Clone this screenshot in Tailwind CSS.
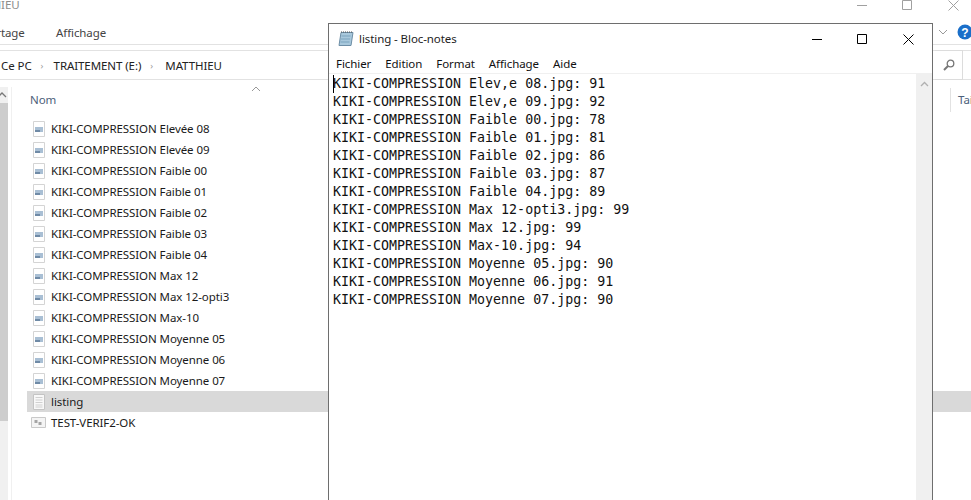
<!DOCTYPE html>
<html lang="fr">

<head>
  <meta charset="UTF-8" />
  <script src="https://cdn.jsdelivr.net/npm/@tailwindcss/browser@4"></script>
  <title>listing - Bloc-notes</title>
</head>

<body class="relative w-[971px] h-[500px] overflow-hidden bg-white font-['Noto_Sans',sans-serif] text-[11.5px] tracking-[-0.08px] text-[#1a1a1a]">

  <!-- explorer behind -->
  <div class="flex flex-col h-full">
    <div class="flex h-[22px] items-center justify-between text-[#8c8c8c]">
      <span class="ml-[-37px] mt-[-12px]">MATTHIEU</span>
      <div class="flex items-center mt-[-12px]">
        <svg class="w-[10px] h-[10px] mr-[35px]" viewBox="0 0 10 10"><path d="M0 5.500h10" stroke="#a0a0a0" fill="none"/></svg>
        <svg class="w-[10px] h-[10px] mr-[36px]" viewBox="0 0 10 10"><path d="M.5 .5h9v9h-9z" stroke="#a0a0a0" fill="none"/></svg>
        <svg class="w-[11px] h-[11px] mr-[12px]" viewBox="0 0 11 11"><path d="M.5 .5l10 10M10.500 .5l-10 10" stroke="#a0a0a0" fill="none"/></svg>
      </div>
    </div>
    <div class="relative flex h-[23px] items-center border-b border-[#e2e2e2] text-[#444]">
      <span class="ml-[-17px] w-[73px]">Partage</span>
      <span>Affichage</span>
      <svg class="absolute left-[938px] top-[7px] w-[10px] h-[6px]" viewBox="0 0 10 6"><path d="M1 1l4 4 4-4" stroke="#999" fill="none"/></svg>
      <svg class="absolute left-[957px] top-[2px] w-[16px] h-[16px]" viewBox="0 0 16 16"><circle cx="8" cy="8" r="7.500" fill="#1a6fc9"/><text x="8" y="12.500" text-anchor="middle" font-size="12" font-weight="700" fill="#fff" font-family="Liberation Sans">?</text></svg>
    </div>
    <div class="relative flex h-[30px] mt-[5px] pt-[2px] items-center gap-[9px] border-t border-b border-[#e2e2e2] text-[#222]">
      <span class="ml-[1px]">Ce PC</span>
      <span class="w-[4px] text-[#999] text-[9px]">›</span>
      <span>TRAITEMENT (E:)</span>
      <span class="w-[6px] text-[#999] text-[9px]">›</span>
      <span>MATTHIEU</span>
      <div class="absolute right-[8px] top-[-1px] bottom-[-1px] w-[28px] border-r border-t border-b border-[#dcdcdc] flex items-center justify-center">
        <svg class="w-[12px] h-[12px]" viewBox="0 0 12 12"><circle cx="7.500" cy="4.500" r="3.300" stroke="#777" stroke-width="1.300" fill="none"/><path d="M5 7l-4 4" stroke="#777" stroke-width="2" fill="none"/></svg>
      </div>
    </div>

    <div class="flex flex-1 min-h-0">
      <!-- nav scrollbar -->
      <div class="w-[8px] mt-[7px] bg-[#f0f0f0] shrink-0 flex flex-col">
        <div class="h-[16px] flex items-center">
          <svg class="w-[8px] h-[6px]" viewBox="0 0 8 6"><path d="M-2 5l4-4 4 4" stroke="#777" stroke-width="1.300" fill="none"/></svg>
        </div>
        <div class="h-[318px] bg-[#cdcdcd]"></div>
      </div>
      <div class="w-[4px] mt-[7px] border-r border-[#f0f0f0] shrink-0"></div>

      <!-- file list -->
      <div class="flex-1 min-w-0 ml-[15px] relative">
        <div class="relative h-[38px]">
          <span class="absolute left-[3px] top-[11px] text-[#4c607a]">Nom</span>
          <svg class="absolute left-[224px] top-[6px] w-[10px] h-[6px]" viewBox="0 0 10 6"><path d="M1 5l4-4 4 4" stroke="#999" fill="none"/></svg>
          <div class="absolute left-[923px] top-[8px] h-[24px] border-l border-[#e2e2e2]"></div>
          <span class="absolute left-[931px] top-[11px] text-[#4c607a]">Taille</span>
        </div>
        <ul>
          <li class="flex h-[21px] items-center"><svg class="w-[16px] h-[16px] ml-[4px] mr-[2px]" viewBox="0 0 16 16"><path d="M2.500 .5h11v15h-11z" fill="#fff" stroke="#d4d4d4"/><path d="M4 6h8v5H4z" fill="#a9bfd4"/><path d="M4 9h5v2H4z" fill="#6f8aa6"/></svg><span class="ml-[2px]">KIKI-COMPRESSION Elevée 08</span></li>
          <li class="flex h-[21px] items-center"><svg class="w-[16px] h-[16px] ml-[4px] mr-[2px]" viewBox="0 0 16 16"><path d="M2.500 .5h11v15h-11z" fill="#fff" stroke="#d4d4d4"/><path d="M4 6h8v5H4z" fill="#a9bfd4"/><path d="M4 9h5v2H4z" fill="#6f8aa6"/></svg><span class="ml-[2px]">KIKI-COMPRESSION Elevée 09</span></li>
          <li class="flex h-[21px] items-center"><svg class="w-[16px] h-[16px] ml-[4px] mr-[2px]" viewBox="0 0 16 16"><path d="M2.500 .5h11v15h-11z" fill="#fff" stroke="#d4d4d4"/><path d="M4 6h8v5H4z" fill="#a9bfd4"/><path d="M4 9h5v2H4z" fill="#6f8aa6"/></svg><span class="ml-[2px]">KIKI-COMPRESSION Faible 00</span></li>
          <li class="flex h-[21px] items-center"><svg class="w-[16px] h-[16px] ml-[4px] mr-[2px]" viewBox="0 0 16 16"><path d="M2.500 .5h11v15h-11z" fill="#fff" stroke="#d4d4d4"/><path d="M4 6h8v5H4z" fill="#a9bfd4"/><path d="M4 9h5v2H4z" fill="#6f8aa6"/></svg><span class="ml-[2px]">KIKI-COMPRESSION Faible 01</span></li>
          <li class="flex h-[21px] items-center"><svg class="w-[16px] h-[16px] ml-[4px] mr-[2px]" viewBox="0 0 16 16"><path d="M2.500 .5h11v15h-11z" fill="#fff" stroke="#d4d4d4"/><path d="M4 6h8v5H4z" fill="#a9bfd4"/><path d="M4 9h5v2H4z" fill="#6f8aa6"/></svg><span class="ml-[2px]">KIKI-COMPRESSION Faible 02</span></li>
          <li class="flex h-[21px] items-center"><svg class="w-[16px] h-[16px] ml-[4px] mr-[2px]" viewBox="0 0 16 16"><path d="M2.500 .5h11v15h-11z" fill="#fff" stroke="#d4d4d4"/><path d="M4 6h8v5H4z" fill="#a9bfd4"/><path d="M4 9h5v2H4z" fill="#6f8aa6"/></svg><span class="ml-[2px]">KIKI-COMPRESSION Faible 03</span></li>
          <li class="flex h-[21px] items-center"><svg class="w-[16px] h-[16px] ml-[4px] mr-[2px]" viewBox="0 0 16 16"><path d="M2.500 .5h11v15h-11z" fill="#fff" stroke="#d4d4d4"/><path d="M4 6h8v5H4z" fill="#a9bfd4"/><path d="M4 9h5v2H4z" fill="#6f8aa6"/></svg><span class="ml-[2px]">KIKI-COMPRESSION Faible 04</span></li>
          <li class="flex h-[21px] items-center"><svg class="w-[16px] h-[16px] ml-[4px] mr-[2px]" viewBox="0 0 16 16"><path d="M2.500 .5h11v15h-11z" fill="#fff" stroke="#d4d4d4"/><path d="M4 6h8v5H4z" fill="#a9bfd4"/><path d="M4 9h5v2H4z" fill="#6f8aa6"/></svg><span class="ml-[2px]">KIKI-COMPRESSION Max 12</span></li>
          <li class="flex h-[21px] items-center"><svg class="w-[16px] h-[16px] ml-[4px] mr-[2px]" viewBox="0 0 16 16"><path d="M2.500 .5h11v15h-11z" fill="#fff" stroke="#d4d4d4"/><path d="M4 6h8v5H4z" fill="#a9bfd4"/><path d="M4 9h5v2H4z" fill="#6f8aa6"/></svg><span class="ml-[2px]">KIKI-COMPRESSION Max 12-opti3</span></li>
          <li class="flex h-[21px] items-center"><svg class="w-[16px] h-[16px] ml-[4px] mr-[2px]" viewBox="0 0 16 16"><path d="M2.500 .5h11v15h-11z" fill="#fff" stroke="#d4d4d4"/><path d="M4 6h8v5H4z" fill="#a9bfd4"/><path d="M4 9h5v2H4z" fill="#6f8aa6"/></svg><span class="ml-[2px]">KIKI-COMPRESSION Max-10</span></li>
          <li class="flex h-[21px] items-center"><svg class="w-[16px] h-[16px] ml-[4px] mr-[2px]" viewBox="0 0 16 16"><path d="M2.500 .5h11v15h-11z" fill="#fff" stroke="#d4d4d4"/><path d="M4 6h8v5H4z" fill="#a9bfd4"/><path d="M4 9h5v2H4z" fill="#6f8aa6"/></svg><span class="ml-[2px]">KIKI-COMPRESSION Moyenne 05</span></li>
          <li class="flex h-[21px] items-center"><svg class="w-[16px] h-[16px] ml-[4px] mr-[2px]" viewBox="0 0 16 16"><path d="M2.500 .5h11v15h-11z" fill="#fff" stroke="#d4d4d4"/><path d="M4 6h8v5H4z" fill="#a9bfd4"/><path d="M4 9h5v2H4z" fill="#6f8aa6"/></svg><span class="ml-[2px]">KIKI-COMPRESSION Moyenne 06</span></li>
          <li class="flex h-[21px] items-center"><svg class="w-[16px] h-[16px] ml-[4px] mr-[2px]" viewBox="0 0 16 16"><path d="M2.500 .5h11v15h-11z" fill="#fff" stroke="#d4d4d4"/><path d="M4 6h8v5H4z" fill="#a9bfd4"/><path d="M4 9h5v2H4z" fill="#6f8aa6"/></svg><span class="ml-[2px]">KIKI-COMPRESSION Moyenne 07</span></li>
          <li class="flex h-[21px] items-center bg-[#d9d9d9]"><svg class="w-[16px] h-[16px] ml-[4px] mr-[2px]" viewBox="0 0 16 16"><path d="M2.500 .5h11v15h-11z" fill="#f8f8f8" stroke="#c4c4c4"/><path d="M4.500 3.500h7M4.500 6h7M4.500 8.500h7M4.500 11h7M4.500 13h7" stroke="#d0d0d0"/></svg><span class="ml-[2px]">listing</span></li>
          <li class="flex h-[21px] items-center"><svg class="w-[16px] h-[16px] ml-[4px] mr-[2px]" viewBox="0 0 16 16"><path d="M.5 2.500h14v10H.5z" fill="#f4f4f4" stroke="#c9c9c9"/><path d="M3.500 5h3v3h-3zM7.500 7h3v3h-3z" fill="#a5a5a5"/></svg><span class="ml-[2px]">TEST-VERIF2-OK</span></li>
        </ul>
      </div>
    </div>
  </div>

  <!-- notepad window -->
  <div class="absolute left-[328px] top-[23px] w-[605px] h-[490px] bg-white border border-[#6e6e6e] border-b-0 flex flex-col">
    <div class="flex h-[30px] items-center shrink-0">
      <svg class="w-[16px] h-[16px] ml-[9px] mr-[5px]" viewBox="0 0 16 16"><path d="M3 1.500h12l-2 13H1z" fill="#a8c8dc" stroke="#6d8ea6"/><path d="M3 1h12" stroke="#555" stroke-dasharray="1 1" fill="none"/><path d="M3.500 5h9M3 8h9M2.500 11h9" stroke="#7ba3bd"/></svg>
      <span class="text-[#222]">listing - Bloc-notes</span>
      <div class="ml-auto flex items-center">
        <svg class="w-[10px] h-[10px] mr-[35px]" viewBox="0 0 10 10"><path d="M0 5.500h10" stroke="#000" fill="none"/></svg>
        <svg class="w-[10px] h-[10px] mr-[36px]" viewBox="0 0 10 10"><path d="M.5 .5h9v9h-9z" stroke="#000" fill="none"/></svg>
        <svg class="w-[11px] h-[11px] mr-[18px]" viewBox="0 0 11 11"><path d="M.5 .5l10 10M10.500 .5l-10 10" stroke="#000" fill="none"/></svg>
      </div>
    </div>
    <div class="flex h-[20px] items-center shrink-0 pl-[7px] gap-[14px] border-b border-[#f0f0f0] text-[#111]">
      <span>Fichier</span><span>Edition</span><span>Format</span><span>Affichage</span><span>Aide</span>
    </div>
    <div class="flex flex-1 min-h-0">
      <pre class="relative flex-1 pl-[4px] pt-0 mt-[1px] font-['DejaVu_Sans_Mono',monospace] text-[13.3px] tracking-normal leading-[18px] text-[#111]"><span class="absolute left-[4px] top-0 w-px h-[18px] bg-black"></span>KIKI-COMPRESSION Elev,e 08.jpg: 91
KIKI-COMPRESSION Elev,e 09.jpg: 92
KIKI-COMPRESSION Faible 00.jpg: 78
KIKI-COMPRESSION Faible 01.jpg: 81
KIKI-COMPRESSION Faible 02.jpg: 86
KIKI-COMPRESSION Faible 03.jpg: 87
KIKI-COMPRESSION Faible 04.jpg: 89
KIKI-COMPRESSION Max 12-opti3.jpg: 99
KIKI-COMPRESSION Max 12.jpg: 99
KIKI-COMPRESSION Max-10.jpg: 94
KIKI-COMPRESSION Moyenne 05.jpg: 90
KIKI-COMPRESSION Moyenne 06.jpg: 91
KIKI-COMPRESSION Moyenne 07.jpg: 90</pre>
      <div class="w-[16px] bg-[#f0f0f0] shrink-0 flex justify-center pt-[7px]">
        <svg class="w-[9px] h-[6px]" viewBox="0 0 9 6"><path d="M1 5l3.500-3.500L8 5" stroke="#b0b0b0" stroke-width="1.300" fill="none"/></svg>
      </div>
    </div>
  </div>
</body>

</html>
